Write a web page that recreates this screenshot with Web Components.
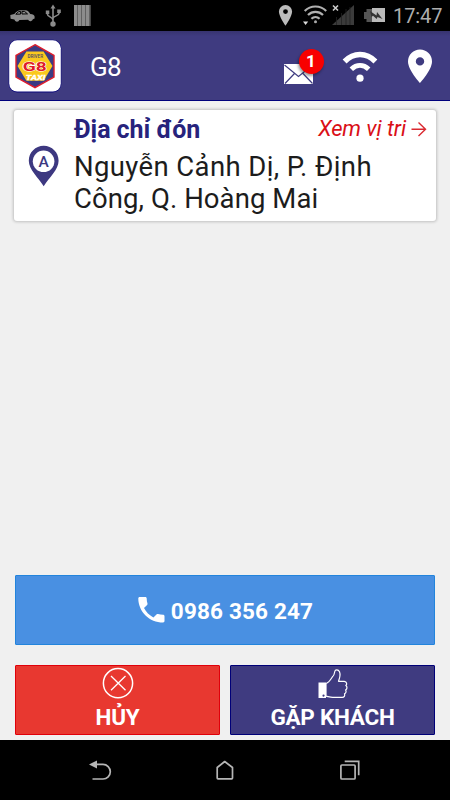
<!DOCTYPE html>
<html lang="vi">
<head>
<meta charset="utf-8">
<title>G8</title>
<style>
html,body{margin:0;height:100%;background:#f0f0f0}
body{font-family:Roboto,"Liberation Sans",sans-serif}
</style>
</head>
<body>
<taxi-app></taxi-app>
<script>
const define = (name, markup) => customElements.define(name, class extends HTMLElement {
  constructor() {
    super();
    const t = document.createElement('template');
    t.innerHTML = markup;
    this.attachShadow({ mode: 'open' }).append(t.content.cloneNode(true));
  }
});

define('status-bar', `
<style>
:host{display:flex;justify-content:space-between;height:31px;background:#000;color:#aeaeae}
svg{display:block}
.right{display:flex}
time{font-size:20px;line-height:32px;width:57px;white-space:nowrap;letter-spacing:-.1px}
</style>
<svg width="100" height="31" viewBox="0 0 100 31">
  <path fill="#8c8c8c" d="M10.300 15l4-1c2.300-2.600 4-3.700 6-3.700h5c2.600 0 3.500 1.700 5 3.600 2.600.3 4 1.100 4.300 2.600v1.900l-1.700.8a2.600 2.600 0 0 1-4.800.6l-8.700.1a2.600 2.600 0 0 1-5-.3l-3.800-.9z"/>
  <path stroke="#000" stroke-width="1" fill="none" d="M15.800 14.200l2.800-2.500 2-.3v2.700zM22 14v-2.600h2.500l3 2.500z"/>
  <g fill="none" stroke="#8c8c8c" stroke-width="1.600"><path d="M53 25V7M47.500 12v2.500c0 2 5.500 3 5.500 5.500M59 11v2.500c0 2.300-6 2.500-6 5"/></g>
  <path fill="#8c8c8c" d="M50.500 8.500L53 4.500l2.500 4zM45.800 10.500h3.500v3.500h-3.500zM57.200 9.500h3.600v3.600h-3.600z"/><circle cx="53" cy="24" r="2.700" fill="#8c8c8c"/>
  <path fill="#8c8c8c" d="M74 5h16.500v21H74z"/><path stroke="#555" d="M77.500 5v21M81.500 5v21M85.500 5v21M89.500 5v21" stroke-width=".8"/>
</svg>
<div class="right">
<svg width="120" height="31" viewBox="273 0 120 31">
  <path fill="#bbb" fill-rule="evenodd" d="M285.500 5a6.600 6.600 0 0 0-6.600 6.600c0 5 6.600 14.200 6.600 14.200s6.600-9.200 6.600-14.200a6.600 6.600 0 0 0-6.600-6.600zm0 4.200a2.400 2.400 0 1 1 0 4.800 2.400 2.400 0 0 1 0-4.800z"/>
  <g fill="none" stroke="#b0b0b0" stroke-width="2.200"><path d="M304.700 11c6-6 15.500-6 21.500 0M308 15c4.300-4.200 10.700-4.200 15 0M311.400 18.700c2.400-2.300 5.800-2.300 8.200 0"/></g>
  <circle cx="315.500" cy="21.800" r="1.500" fill="#aaa"/><path fill="#ddd" d="M303 21.500h5.200l-2.600 3.500z"/>
  <path fill="#3b3b3b" d="M332 25L354 5v20z"/><path stroke="#222" stroke-width=".8" d="M336.500 17v8M341.500 13v12M346 9v16M350 7v18"/>
  <path stroke="#ccc" stroke-width="1.600" d="M333 5.500l5 5M338 5.500l-5 5"/>
  <path fill="#555" d="M364 12h2.500V9H374v13h-7.500v-3H364z"/><path fill="#bbb" d="M372 8h13v14h-13z"/>
  <path fill="#333" d="M370 11l6.500 4.500.5-3.500 5.500 7-5-1.900-.8 2-3.700-3.300-1.500 1.200z"/>
</svg>
<time>17:47</time>
</div>`);

define('app-logo', `
<style>:host{display:block;width:52px;height:50px}svg{display:block}text{font-family:Roboto,sans-serif;font-weight:700}</style>
<svg width="54" height="54" viewBox="8 39 54 54">
  <rect x="8.700" y="39.800" width="52.600" height="52.600" rx="8.500" fill="#0b087c"/>
  <rect x="9.200" y="40.300" width="51.600" height="51.200" rx="8" fill="#fff"/>
  <path d="M35 44.700L54 55.300V77L35 87.600 16 77V55.300z" fill="#3b3b83" stroke="#e01d2b" stroke-width="1.400"/>
  <path d="M26.400 51.500h17.200L52.500 66l-8.900 14.700H26.400L17.500 66z" fill="#fac81e"/>
  <text x="27.500" y="58.400" font-size="5.400" textLength="15.500" lengthAdjust="spacingAndGlyphs" fill="#4a456c" style="font-weight:500">DRIVER</text>
  <text x="22.800" y="70.700" font-size="13" textLength="24" lengthAdjust="spacingAndGlyphs" fill="#df1b27" stroke="#fff" stroke-width="1.200" paint-order="stroke">G8</text>
  <text x="25.800" y="80" font-size="7.200" textLength="19.500" lengthAdjust="spacingAndGlyphs" fill="#fff" font-style="italic" stroke="#fff" stroke-width=".3">TAXI</text>
</svg>`);

define('mail-badge', `
<style>
:host{display:block;position:relative;width:40px;height:70px}
svg{display:block}
b{position:absolute;left:14.500px;top:18px;width:25px;height:25px;border-radius:50%;background:#f80000;color:#fff;font:700 17px/25px Roboto,sans-serif;text-align:center;box-shadow:-1px 2px 3px #0006}
</style>
<svg width="40" height="70" viewBox="284 31 40 70">
  <path fill="#fff" d="M284 64h29v20h-29z"/>
  <path fill="none" stroke="#3f3c80" stroke-width="1.200" d="M284.500 65l14 11.500 14-11.500M285 83.500l9.500-10M312.500 83.500l-9.500-10"/>
</svg><b>1</b>`);

define('app-header', `
<style>
:host{display:flex;box-sizing:border-box;height:70px;background:linear-gradient(#37336f,#3f3b80 5px);border-bottom:1px solid #00007c;color:#fff;padding-left:8px}
app-logo{padding-top:8px}
h1{margin:0 0 0 30px;flex:1;font-weight:400;font-size:26px;line-height:73px;letter-spacing:-.7px}
svg{display:block}
</style>
<app-logo></app-logo><h1>G8</h1><mail-badge></mail-badge>
<svg width="126" height="70" viewBox="324 31 126 70">
  <g fill="none" stroke="#fff"><path stroke-width="5.400" d="M344.600 61.500c9-9.300 21.800-9.300 30.800 0"/><path stroke-width="5" d="M351.300 69.200c5.300-5 12.100-5 17.400 0"/></g>
  <circle cx="360" cy="78.200" r="3.600" fill="#fff"/>
  <path fill="#fff" fill-rule="evenodd" d="M420 49.500a12 12 0 0 0-12 12C408 70 420 83 420 83s12-13 12-21.500a12 12 0 0 0-12-12zm0 7.700a4.200 4.200 0 1 1 0 8.400 4.200 4.200 0 0 1 0-8.400z"/>
</svg>`);

define('address-card', `
<style>
:host{display:grid;grid-template-columns:60px 1fr;margin:9px 14px 0;height:110.500px;background:#fff;border-radius:3px;box-shadow:0 0 3px 1px #0003;box-sizing:border-box}
.pin{display:block}
.top{display:flex;justify-content:space-between;height:38px}
h2{margin:0;color:#27237c;font-size:25px;line-height:39px;letter-spacing:-.05px;white-space:nowrap}
a{display:flex;color:#da0f17;font-style:italic;font-size:22px;line-height:37px;white-space:nowrap;padding-right:9px;letter-spacing:-.1px}
a svg{display:block}
p{margin:3px 0 0;color:#1c1c1c;font-size:27.500px;line-height:32px;white-space:nowrap}
</style>
<svg class="pin" width="60" height="110" viewBox="14 110 60 110">
  <path fill="#3d3880" d="M43.700 145.800c-8.300 0-14.900 6.700-14.900 14.900 0 9 9.500 16.700 14.900 25.500 5.400-8.800 14.900-16.500 14.900-25.500 0-8.200-6.600-14.900-14.900-14.900z"/>
  <circle cx="43.600" cy="161.300" r="10.800" fill="#fff"/>
  <text x="43.600" y="166.600" text-anchor="middle" font-size="15.500" font-weight="500" fill="#3d3880">A</text>
</svg>
<div>
  <div class="top"><h2><slot name="title"></slot></h2>
  <a><slot name="link"></slot><svg width="21" height="38" viewBox="406 110 21 38"><path fill="none" stroke="#da2930" stroke-width="1.400" d="M411.500 129.200h14M418.500 122.500l7 6.700-7 6.700"/></svg></a></div>
  <p><slot></slot></p>
</div>`);

define('call-button', `
<style>
:host{display:flex;box-sizing:border-box;height:70px;border:1px solid #2284dc;border-radius:1px;background:#4990e2;color:#fff;justify-content:center}
svg{display:block}
span{font-weight:700;font-size:22.500px;line-height:70px;white-space:nowrap;letter-spacing:.17px}
</style>
<svg width="34" height="68" viewBox="137.300 576 34 68"><path fill="#fff" d="M140 597h5.600c.8 0 1.400.6 1.400 1.400 0 1.800.3 3.500.8 5.100.2.500 0 1.100-.4 1.500l-3.100 3.100c2 4 5.300 7.300 9.400 9.400l3.100-3.100c.4-.4 1-.5 1.500-.4 1.600.5 3.300.8 5.100.8.800 0 1.400.6 1.400 1.400v4.900c0 .8-.6 1.400-1.400 1.400-13.600 0-24.800-11-24.800-24.100 0-.8.600-1.400 1.400-1.400z"/></svg>
<span><slot></slot></span>`);

define('action-button', `
<style>
:host{display:flex;flex-direction:column;align-items:center;box-sizing:border-box;height:70px;flex:1;border:1px solid #e0000a;border-radius:1px;background:#e83830;color:#fff}
:host([primary]){background:#3f3b80;border-color:#000078}
.icon{display:block;height:34px}
span{font-weight:700;font-size:22.500px;line-height:34px;white-space:nowrap;letter-spacing:-.25px}
</style>
<slot class="icon" name="icon"></slot><span><slot></slot></span>`);

define('nav-bar', `
<style>:host{display:block;height:60px;background:#000}svg{display:block}</style>
<svg width="450" height="60" viewBox="0 740 450 60" fill="none" stroke="#b5b5b5" stroke-width="1.700">
  <path d="M94 764.400h9a7 7 0 0 1 0 14.600H92.500"/><path fill="#b5b5b5" stroke="none" d="M89 764.400l8-4v8z"/>
  <path d="M217.200 778v-10.500l7.500-6 7.800 6V778q0 .8-.8.800h-13.700q-.8 0-.8-.8z" stroke-linejoin="round"/>
  <rect x="340.900" y="765" width="14.200" height="14" rx="1"/><path d="M344.700 761.300h14v14"/>
</svg>`);

define('taxi-app', `
<style>
:host{display:flex;flex-direction:column;width:450px;height:800px;overflow:hidden;background:#f0f0f0}
main{flex:1;display:flex;flex-direction:column}
.spacer{flex:1}
.l1{letter-spacing:.38px}
.l2{letter-spacing:.08px}
call-button{margin:0 15px 20px}
.actions{display:flex;gap:10px;padding:0 15px 5px}
.actions svg{display:block}
</style>
<status-bar></status-bar>
<app-header></app-header>
<main>
  <address-card><span slot="title">Địa chỉ đón</span><span slot="link">Xem vị tri</span><span class="l1">Nguyễn Cảnh Dị, P. Định</span><br><span class="l2">Công, Q. Hoàng Mai</span></address-card>
  <div class="spacer"></div>
  <call-button>0986 356 247</call-button>
  <div class="actions">
    <action-button><svg slot="icon" width="34" height="34" viewBox="100.500 666 34 34" fill="none" stroke="#fff"><circle cx="117.500" cy="683.200" r="14.600" stroke-width="1.500"/><path stroke-width="1.300" d="M110.500 676l14.500 14.300M125 676l-14.500 14.300"/></svg>HỦY</action-button>
    <action-button primary><svg slot="icon" width="34" height="34" viewBox="315.500 666 34 34"><path fill="#fff" fill-rule="evenodd" d="M318 682.500h7.500V698H318zm5 12a1.100 1.100 0 1 0 .1 2.200 1.100 1.100 0 0 0-.1-2.200z"/><path fill="none" stroke="#fff" stroke-width="1.200" stroke-linejoin="round" d="M325.500 683.500c3-1 4.600-3.800 6.300-6.500 1.800-1.300 2.200-3.500 2.500-5.500.3-2.200 3.500-2.300 4.700.3 1 2.500.5 5.700-1 9.500h5.800c2.600.3 3 3 1.500 4.200 1.800 1.300 1.400 3.500-.2 4.400 1 1.600.4 3.200-1.100 3.900.7 2-.3 3.600-2.300 3.600h-9.500c-2.500 0-4.500-.8-6.700-1.200z"/></svg>GẶP KHÁCH</action-button>
  </div>
</main>
<nav-bar></nav-bar>`);
</script>
</body>
</html>
